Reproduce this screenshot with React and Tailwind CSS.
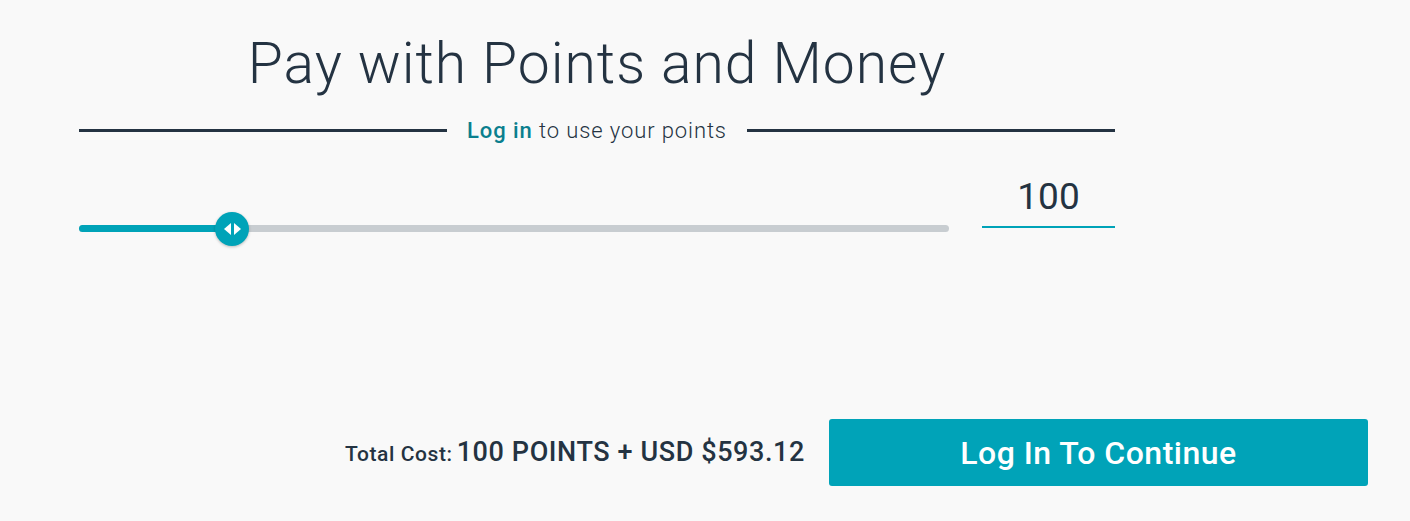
import { useState } from "react";

const font = { fontFamily: "Roboto, 'Open Sans', sans-serif" };

function Thumb() {
  return (
    <div className="absolute top-1/2 -translate-y-1/2 -translate-x-1/2 w-[34px] h-[34px] rounded-full bg-[#00a3b8] shadow-[0_1px_3px_rgba(0,0,0,0.25)] flex items-center justify-center gap-[3px]" style={{ left: "17.6%" }}>
      <svg width="7" height="12" viewBox="0 0 7 12">
        <path d="M7 0 L0 6 L7 12 Z" fill="#fff" />
      </svg>
      <svg width="7" height="12" viewBox="0 0 7 12">
        <path d="M0 0 L7 6 L0 12 Z" fill="#fff" />
      </svg>
    </div>
  );
}

export default function App() {
  const [points] = useState(100);

  return (
    <div className="w-[1410px] h-[521px] bg-[#f9f9f9] text-[#243342] flex flex-col" style={font}>
      <div className="w-[1036px] ml-[79px] flex flex-col">
        <h1 className="text-center font-light text-[57px] leading-none mt-[35px] tracking-[1px]">
          Pay with Points and Money
        </h1>

        <div className="flex items-center gap-5 mt-[22px]">
          <div className="flex-1 h-[3px] bg-[#243342]" />
          <p className="text-[22px] font-light tracking-[0.9px]">
            <span className="font-medium text-[#0b7f8e]">Log in</span> to use your points
          </p>
          <div className="flex-1 h-[3px] bg-[#243342]" />
        </div>

        <div className="flex items-end gap-[33px] mt-[31px]">
          <div className="relative w-[870px] h-[7px] rounded-full bg-[#c8cdd1] mb-[-4px]">
            <div className="h-full w-[17.6%] rounded-full bg-[#00a3b8]" />
            <Thumb />
          </div>
          <div className="flex-1 border-b-2 border-[#00a3b8] text-center text-[37px] leading-none pb-[11px]">
            {points}
          </div>
        </div>
      </div>

      <div className="mt-auto mb-[35px] mr-[42px] flex items-center justify-end gap-6">
        <p className="font-medium">
          <span className="text-[21px] tracking-[0.6px]">Total Cost:</span>{" "}
          <span className="text-[27px] tracking-[0.6px]">100 POINTS + USD $593.12</span>
        </p>
        <button className="w-[539px] h-[67px] rounded-[3px] bg-[#00a3b8] text-white text-[32px] font-medium tracking-[0.5px]">
          Log In To Continue
        </button>
      </div>
    </div>
  );
}
